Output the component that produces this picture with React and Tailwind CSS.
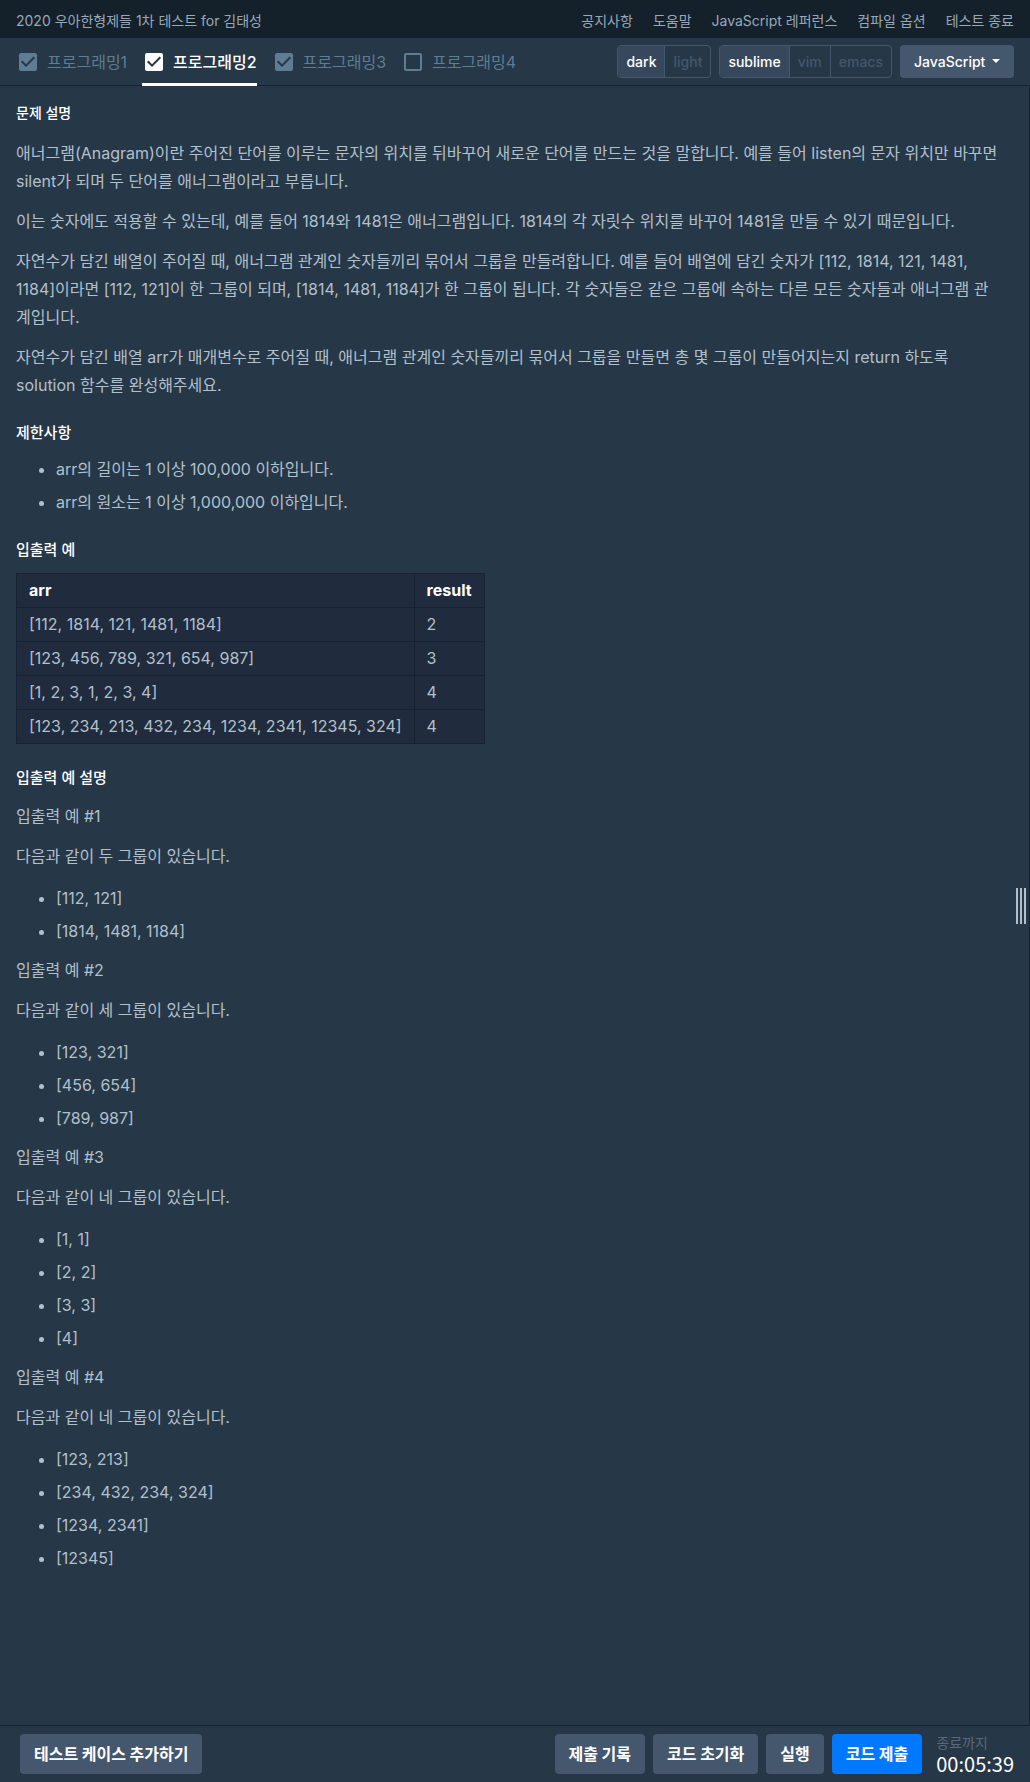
import React, { useState } from "react";
import { MdCheckBox, MdCheckBoxOutlineBlank } from "react-icons/md";

const links = ["공지사항", "도움말", "JavaScript 레퍼런스", "컴파일 옵션", "테스트 종료"];

const challenges = [
  { id: "tab-1", name: "프로그래밍1", done: true },
  { id: "tab-2", name: "프로그래밍2", done: true, active: true },
  { id: "tab-3", name: "프로그래밍3", done: true },
  { id: "tab-4", name: "프로그래밍4", done: false },
];

const rows = [
  ["[112, 1814, 121, 1481, 1184]", 2],
  ["[123, 456, 789, 321, 654, 987]", 3],
  ["[1, 2, 3, 1, 2, 3, 4]", 4],
  ["[123, 234, 213, 432, 234, 1234, 2341, 12345, 324]", 4],
];

const examples = [
  { title: "입출력 예 #1", text: "다음과 같이 두 그룹이 있습니다.", groups: ["[112, 121]", "[1814, 1481, 1184]"] },
  { title: "입출력 예 #2", text: "다음과 같이 세 그룹이 있습니다.", groups: ["[123, 321]", "[456, 654]", "[789, 987]"] },
  { title: "입출력 예 #3", text: "다음과 같이 네 그룹이 있습니다.", groups: ["[1, 1]", "[2, 2]", "[3, 3]", "[4]"] },
  {
    title: "입출력 예 #4",
    text: "다음과 같이 네 그룹이 있습니다.",
    groups: ["[123, 213]", "[234, 432, 234, 324]", "[1234, 2341]", "[12345]"],
  },
];

function Tab({ id, name, done, active }) {
  const Icon = done ? MdCheckBox : MdCheckBoxOutlineBlank;
  return (
    <li
      className={
        active
          ? "-mb-px flex items-center gap-[7px] border-b-[3px] border-white pt-0.5 text-white"
          : "flex items-center gap-[7px] text-[#5f7d92]"
      }
    >
      <span className="grid">
        <input
          type="checkbox"
          checked={done}
          readOnly
          aria-labelledby={id}
          className="col-start-1 row-start-1 size-6 appearance-none"
        />
        <Icon aria-hidden="true" className="pointer-events-none col-start-1 row-start-1 size-6" />
      </span>
      <a id={id} href="#" className={active ? "font-medium" : ""}>
        {name}
      </a>
    </li>
  );
}

function Toggle({ label, options }) {
  const [value, setValue] = useState(options[0]);
  return (
    <div
      role="group"
      aria-label={label}
      className="flex h-[33px] divide-x divide-[#44576c] overflow-hidden rounded border border-[#44576c] text-sm font-medium"
    >
      {options.map((option) => (
        <button
          key={option}
          type="button"
          aria-pressed={option === value}
          onClick={() => setValue(option)}
          className={option === value ? "bg-[#37485d] px-2 text-white" : "px-2 text-[#44576c]"}
        >
          {option}
        </button>
      ))}
    </div>
  );
}

function Heading({ children, className = "mt-6 text-[15px]" }) {
  return <h2 className={`leading-5 font-medium text-white ${className}`}>{children}</h2>;
}

function Bullets({ items, className = "mt-3.5" }) {
  return (
    <ul className={`mb-[11px] flex list-disc flex-col gap-[5px] pl-10 ${className}`}>
      {items.map((item) => (
        <li key={item}>{item}</li>
      ))}
    </ul>
  );
}

function FooterButton({ children, primary }) {
  return (
    <button
      type="button"
      className={
        primary
          ? "h-10 rounded bg-[#0078ff] px-3.5 pb-0.5 font-bold text-white"
          : "h-10 rounded bg-[#44576c] px-3.5 pb-0.5 font-bold text-white"
      }
    >
      {children}
    </button>
  );
}

export default function App() {
  return (
    <div className="flex min-h-screen flex-col bg-[#263747] font-[Inter,'Noto_Sans_CJK_KR',sans-serif] text-base text-[#b2c0cc]">
      <header className="flex h-[38px] items-center justify-between bg-[#14202a] px-4 pt-[3px] text-sm text-[#98a8b9]">
        <h1>2020 우아한형제들 1차 테스트 for 김태성</h1>
        <nav className="flex gap-5">
          {links.map((link) => (
            <a key={link} href="#">
              {link}
            </a>
          ))}
        </nav>
      </header>

      <div className="flex h-12 justify-between border-b border-[#172334] px-4">
        <ul className="flex gap-[15px]">
          {challenges.map((challenge) => (
            <Tab key={challenge.id} {...challenge} />
          ))}
        </ul>
        <div className="flex items-center gap-2">
          <Toggle label="테마" options={["dark", "light"]} />
          <Toggle label="키 바인딩" options={["sublime", "vim", "emacs"]} />
          <div className="relative">
            <select
              aria-label="언어"
              className="h-[33px] appearance-none rounded bg-[#44576c] pr-7 pl-3.5 text-sm font-medium text-white"
            >
              <option>JavaScript</option>
            </select>
            <svg
              viewBox="0 0 8 4"
              aria-hidden="true"
              className="pointer-events-none absolute top-3.5 right-3.5 h-1 w-2 fill-white"
            >
              <path d="M0 0h8L4 4z" />
            </svg>
          </div>
        </div>
      </div>

      <div className="flex grow border-r border-[#172334]">
        <main className="min-w-0 grow pt-[17px] pl-4 leading-7">
          <Heading className="text-sm">문제 설명</Heading>
          <div className="mt-4 flex flex-col gap-3">
            <p>
              애너그램(Anagram)이란 주어진 단어를 이루는 문자의 위치를 뒤바꾸어 새로운 단어를 만드는 것을 말합니다. 예를
              들어 listen의 문자 위치만 바꾸면 silent가 되며 두 단어를 애너그램이라고 부릅니다.
            </p>
            <p>
              이는 숫자에도 적용할 수 있는데, 예를 들어 1814와 1481은 애너그램입니다. 1814의 각 자릿수 위치를 바꾸어
              1481을 만들 수 있기 때문입니다.
            </p>
            <p>
              자연수가 담긴 배열이 주어질 때, 애너그램 관계인 숫자들끼리 묶어서 그룹을 만들려합니다. 예를 들어 배열에
              담긴 숫자가 [112, 1814, 121, 1481, 1184]이라면 [112, 121]이 한 그룹이 되며, [1814, 1481, 1184]가 한
              그룹이 됩니다. 각 숫자들은 같은 그룹에 속하는 다른 모든 숫자들과 애너그램 관계입니다.
            </p>
            <p>
              자연수가 담긴 배열 arr가 매개변수로 주어질 때, 애너그램 관계인 숫자들끼리 묶어서 그룹을 만들면 총 몇
              그룹이 만들어지는지 return 하도록 solution 함수를 완성해주세요.
            </p>
          </div>

          <Heading>제한사항</Heading>
          <Bullets
            className="mt-3"
            items={["arr의 길이는 1 이상 100,000 이하입니다.", "arr의 원소는 1 이상 1,000,000 이하입니다."]}
          />

          <Heading>입출력 예</Heading>
          <table className="mt-[13px] border-collapse bg-[#202b3d] text-left leading-6">
            <thead>
              <tr className="font-bold text-white">
                <th className="border border-[#172334] px-3 pt-1 pb-[5px]">arr</th>
                <th className="border border-[#172334] px-3 pt-1 pb-[5px]">result</th>
              </tr>
            </thead>
            <tbody>
              {rows.map(([arr, result]) => (
                <tr key={arr}>
                  <td className="border border-[#172334] px-3 pt-1 pb-[5px]">{arr}</td>
                  <td className="border border-[#172334] px-3 pt-1 pb-[5px]">{result}</td>
                </tr>
              ))}
            </tbody>
          </table>

          <Heading>입출력 예 설명</Heading>
          <div className="mt-3.5">
            {examples.map((example) => (
              <section key={example.title}>
                <h3>{example.title}</h3>
                <p className="mt-3">{example.text}</p>
                <Bullets items={example.groups} />
              </section>
            ))}
          </div>
        </main>
        <div className="flex w-7 shrink-0 items-center justify-end pr-[3px]">
          <button type="button" aria-label="패널 크기 조절" className="flex h-9 cursor-col-resize gap-0.5">
            <span className="h-full w-0.5 bg-[#b2c0cc]" />
            <span className="h-full w-0.5 bg-[#b2c0cc]" />
            <span className="h-full w-0.5 bg-[#b2c0cc]" />
          </button>
        </div>
      </div>

      <footer className="flex h-[57px] items-center justify-between border-t border-[#172334] pr-4 pl-5 font-['Noto_Sans_CJK_KR',sans-serif]">
        <FooterButton>테스트 케이스 추가하기</FooterButton>
        <div className="flex items-center gap-2">
          <FooterButton>제출 기록</FooterButton>
          <FooterButton>코드 초기화</FooterButton>
          <FooterButton>실행</FooterButton>
          <FooterButton primary>코드 제출</FooterButton>
          <div className="ml-1.5 flex flex-col">
            <span className="text-sm leading-5 text-[#5a6774]">종료까지</span>
            <time className="text-xl leading-6 text-white">00:05:39</time>
          </div>
        </div>
      </footer>
    </div>
  );
}
